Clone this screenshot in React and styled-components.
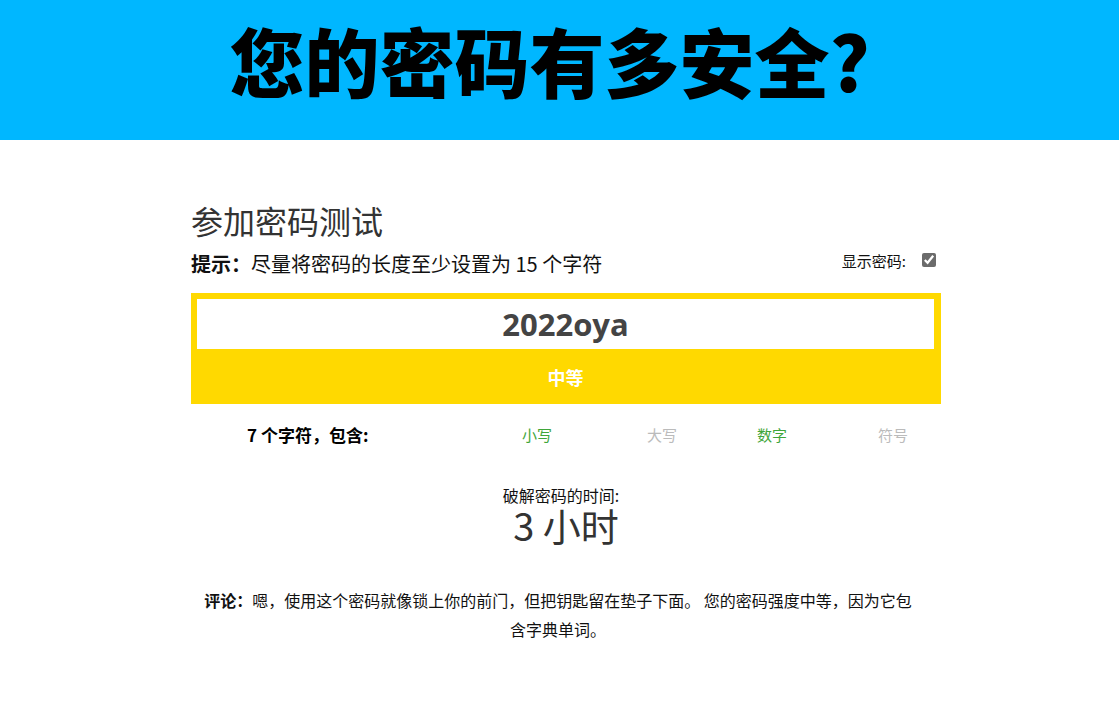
import React, { useState } from 'react';
import styled, { createGlobalStyle } from 'styled-components';

const GlobalStyle = createGlobalStyle`
  body {
    margin: 0;
    background: #fff;
    font-family: 'Noto Sans', 'Noto Sans CJK SC', sans-serif;
    color: #222;
  }
`;

const checks = [
  { label: '小写', ok: true, width: 125 },
  { label: '大写', ok: false, width: 110 },
  { label: '数字', ok: true, width: 121 },
  { label: '符号', ok: false, width: 60 },
];

const App = () => {
  const [password, setPassword] = useState('2022oya');
  const [show, setShow] = useState(true);

  return (
    <>
      <GlobalStyle />
      <Header>
        <Title>您的密码有多安全?</Title>
      </Header>
      <Main>
        <Heading>参加密码测试</Heading>
        <HintRow>
          <Hint>
            <strong>提示：</strong>尽量将密码的长度至少设置为 15 个字符
          </Hint>
          <ShowToggle>
            显示密码:
            <Check
              type='checkbox'
              checked={show}
              onChange={(e) => setShow(e.target.checked)}
            />
          </ShowToggle>
        </HintRow>
        <Meter>
          <PasswordInput
            type={show ? 'text' : 'password'}
            value={password}
            onChange={(e) => setPassword(e.target.value)}
          />
          <Strength>中等</Strength>
        </Meter>
        <CharRow>
          <CharLabel>7 个字符，包含:</CharLabel>
          {checks.map((c) => (
            <CharItem key={c.label} $ok={c.ok} $width={c.width}>
              {c.label}
            </CharItem>
          ))}
        </CharRow>
        <Crack>
          <CrackLabel>破解密码的时间:</CrackLabel>
          <CrackTime>3 小时</CrackTime>
        </Crack>
        <Comment>
          <strong>评论：</strong>嗯，使用这个密码就像锁上你的前门，但把钥匙留在垫子下面。
          您的密码强度中等，因为它包含字典单词。
        </Comment>
      </Main>
    </>
  );
};

const Header = styled.header`
  height: 140px;
  background: #00b7ff;
  display: flex;
  justify-content: center;
  padding-top: 12px;
  box-sizing: border-box;
`;

const Title = styled.h1`
  margin: 0 0 0 -20px;
  font-family: 'Noto Sans CJK SC', sans-serif;
  font-weight: 900;
  font-size: 75px;
  line-height: 96px;
  color: #000;
`;

const Main = styled.main`
  width: 750px;
  margin: 0 auto;
  padding-left: 13px;
  padding-top: 56px;
`;

const Heading = styled.h2`
  margin: 0;
  font-family: 'Noto Sans CJK SC', sans-serif;
  font-weight: 400;
  font-size: 32px;
  line-height: 48px;
  color: #333;
`;

const HintRow = styled.div`
  display: flex;
  justify-content: space-between;
  align-items: center;
  height: 38px;
`;

const Hint = styled.div`
  font-family: 'Noto Sans CJK SC', sans-serif;
  font-size: 20px;
  color: #111;
  strong {
    font-size: 20px;
    font-weight: 700;
  }
`;

const ShowToggle = styled.label`
  display: flex;
  align-items: center;
  font-family: 'Noto Sans CJK SC', sans-serif;
  font-size: 15px;
  color: #111;
  margin-top: -6px;
  margin-right: 5px;
`;

const Check = styled.input`
  width: 14px;
  height: 14px;
  margin: 0 0 0 16px;
  accent-color: #6b6b6b;
`;

const Meter = styled.div`
  margin-top: 11px;
  background: #ffd900;
  padding: 6px 7px 0 6px;
`;

const PasswordInput = styled.input`
  display: block;
  width: 100%;
  box-sizing: border-box;
  height: 50px;
  border: none;
  outline: none;
  background: #fff;
  text-align: center;
  font-family: 'Open Sans', 'Noto Sans', sans-serif;
  font-weight: 700;
  font-size: 31px;
  color: #444;
`;

const Strength = styled.div`
  height: 55px;
  display: flex;
  align-items: center;
  justify-content: center;
  font-family: 'Noto Sans CJK SC', sans-serif;
  font-weight: 700;
  font-size: 18px;
  color: #fff;
`;

const CharRow = styled.div`
  display: flex;
  align-items: center;
  padding-left: 56px;
  height: 60px;
`;

const CharLabel = styled.div`
  width: 275px;
  font-family: 'Noto Sans CJK SC', sans-serif;
  font-weight: 700;
  font-size: 17px;
  color: #000;
`;

const CharItem = styled.div`
  width: ${(p) => p.$width}px;
  font-family: 'Noto Sans CJK SC', sans-serif;
  font-size: 15px;
  color: ${(p) => (p.$ok ? '#3fa63a' : '#bbb')};
`;

const Crack = styled.div`
  margin-top: 21px;
  text-align: center;
  color: #333;
  font-family: 'Noto Sans CJK SC', sans-serif;
`;

const CrackLabel = styled.div`
  font-size: 16px;
  line-height: 20px;
  color: #111;
  margin-right: 10px;
`;

const CrackTime = styled.div`
  font-size: 38px;
  line-height: 40px;
`;

const Comment = styled.p`
  margin: 41px 0 0;
  padding: 0 25px 0 9px;
  text-align: center;
  font-family: 'Noto Sans CJK SC', sans-serif;
  font-size: 16px;
  line-height: 29px;
  color: #111;
  strong {
    font-weight: 700;
  }
`;

export default App;
